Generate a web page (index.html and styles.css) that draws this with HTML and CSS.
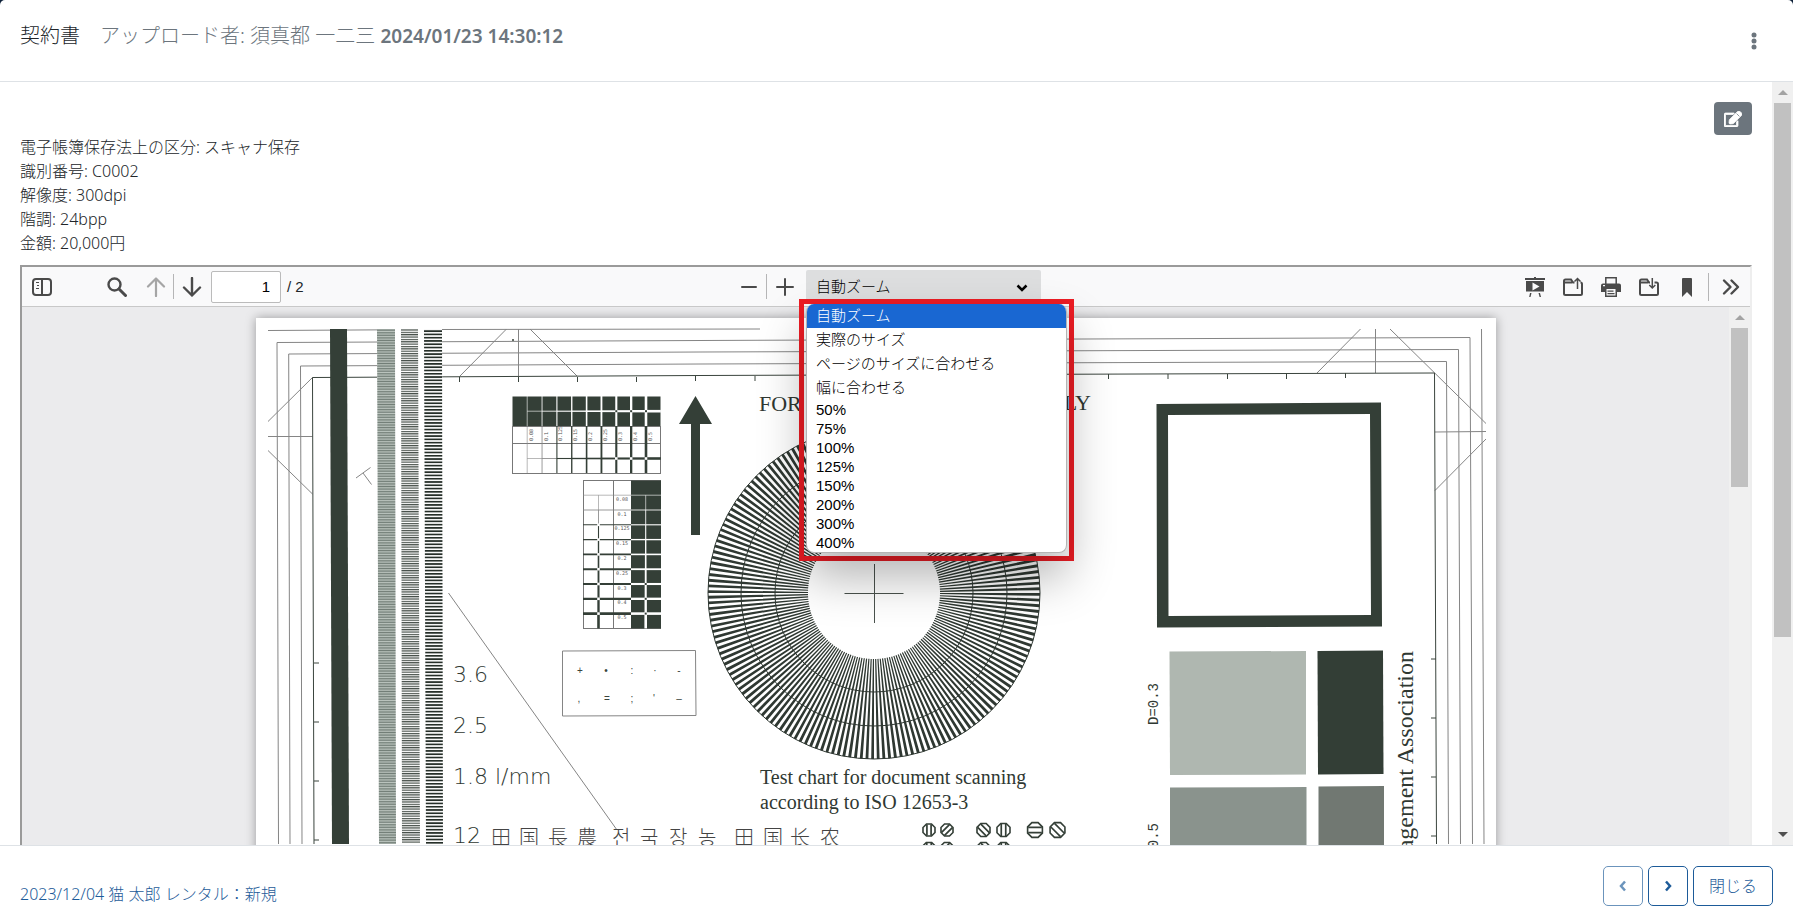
FILE: index.html
```html
<!DOCTYPE html>
<html lang="ja">
<head>
  <meta charset="UTF-8">
  <meta name="viewport" content="width=device-width, initial-scale=1.0">
  <title>契約書</title>
  <link rel="stylesheet" href="styles.css">
</head>
<body>
<div class="modal">
  <header class="modal-header">
    <h1 class="title">契約書</h1>
    <div class="uploader">アップロード者: 須真都 一二三 <time class="stamp">2024/01/23 14:30:12</time></div>
    <button class="menu-btn" aria-label="メニュー">
      <svg width="6" height="18" viewBox="0 0 6 18"><circle cx="3" cy="3" r="2.5"/><circle cx="3" cy="9" r="2.5"/><circle cx="3" cy="15" r="2.5"/></svg>
    </button>
  </header>

  <div class="modal-body">
    <main class="content">
      <div class="actions">
        <button class="edit-btn" aria-label="編集">
          <svg width="18" height="16" viewBox="0 0 576 512" fill="#fff" stroke="#fff" stroke-width="24"><path d="M402.300 344.900l32-32c5-5 13.700-1.500 13.700 5.700V464c0 26.500-21.500 48-48 48H48c-26.500 0-48-21.500-48-48V112c0-26.500 21.500-48 48-48h273.500c7.100 0 10.700 8.600 5.700 13.700l-32 32c-1.500 1.500-3.500 2.300-5.700 2.300H48v352h352V350.500c0-2.100.8-4.100 2.300-5.600z"/><path d="M558.900 143.100L296.300 405.700l-90.400 10c-26.200 2.900-48.500-19.200-45.600-45.600l10-90.400L432.900 17.100c22.900-22.900 59.900-22.900 82.700 0l43.200 43.200c22.900 22.900 22.900 60 .1 82.800z"/><path d="M402 82l92 92" stroke="#6c757d"/></svg>
        </button>
      </div>
      <ul class="meta">
        <li>電子帳簿保存法上の区分: スキャナ保存</li>
        <li>識別番号: C0002</li>
        <li>解像度: 300dpi</li>
        <li>階調: 24bpp</li>
        <li>金額: 20,000円</li>
      </ul>

      <section class="viewer">
        <div class="toolbar">
          <div class="tools">
            <button class="tool tool-sidebar" aria-label="サイドバー">
              <svg viewBox="0 0 20 20"><rect x="1" y="2" width="18" height="16" rx="3" fill="none" stroke="#4a4a4a" stroke-width="2"/><path d="M9 2h2v16H9zM4 5h3v1H4zM5 8h2v1H5zM4 11h3v1H4z" fill="#4a4a4a"/></svg>
            </button>
            <button class="tool tool-search" aria-label="検索">
              <svg viewBox="0 0 20 20" fill="none" stroke="#4a4a4a"><circle cx="7.500" cy="7.500" r="6" stroke-width="2.400"/><path d="M12 12l6.500 6.500" stroke-width="3" stroke-linecap="round"/></svg>
            </button>
            <button class="tool" aria-label="前のページ" disabled>
              <svg viewBox="0 0 20 20" fill="none" stroke="#a5a5a5" stroke-width="2.200" stroke-linecap="round" stroke-linejoin="round"><path d="M10 19V1.500M2 9.500l8-8 8 8"/></svg>
            </button>
            <span class="sep"></span>
            <button class="tool" aria-label="次のページ">
              <svg viewBox="0 0 20 20" fill="none" stroke="#4a4a4a" stroke-width="2.400" stroke-linecap="round" stroke-linejoin="round"><path d="M10 1v17.500M2 10.500l8 8 8-8"/></svg>
            </button>
            <input class="page-input" id="pageNumber" type="text" value="1" aria-label="ページ">
            <label class="page-count" for="pageNumber">/ 2</label>
          </div>
          <div class="tools">
            <button class="tool" aria-label="縮小">
              <svg viewBox="0 0 20 20" stroke="#4a4a4a" stroke-width="2" stroke-linecap="round"><path d="M3 10h14"/></svg>
            </button>
            <span class="sep"></span>
            <button class="tool" aria-label="拡大">
              <svg viewBox="0 0 20 20" stroke="#4a4a4a" stroke-width="2" stroke-linecap="round"><path d="M2 10h16M10 2v16"/></svg>
            </button>
            <div class="zoom">
              <select class="zoom-select" aria-label="ズーム">
                <option>自動ズーム</option>
                <option>実際のサイズ</option>
                <option>ページのサイズに合わせる</option>
                <option>幅に合わせる</option>
              </select>
              <svg class="zoom-caret" width="12" height="8" viewBox="0 0 12 8" fill="none" stroke="#000" stroke-width="2.500"><path d="M1.500 1.500L6 6l4.500-4.500"/></svg>
              <div class="zoom-frame">
                <ul class="zoom-list" role="listbox">
                  <li class="selected" role="option" aria-selected="true">自動ズーム</li>
                  <li role="option">実際のサイズ</li>
                  <li role="option">ページのサイズに合わせる</li>
                  <li role="option">幅に合わせる</li>
                  <li class="percent" role="option">50%</li>
                  <li class="percent" role="option">75%</li>
                  <li class="percent" role="option">100%</li>
                  <li class="percent" role="option">125%</li>
                  <li class="percent" role="option">150%</li>
                  <li class="percent" role="option">200%</li>
                  <li class="percent" role="option">300%</li>
                  <li class="percent" role="option">400%</li>
                </ul>
              </div>
            </div>
          </div>
          <div class="tools tools-right">
            <button class="tool" aria-label="プレゼンテーション">
              <svg viewBox="0 0 20 20" fill="#4a4a4a"><path d="M9 0h2v1h9v2H0V1h9z"/><path fill-rule="evenodd" d="M1 4h18v10.500H1zM7.500 5.500v8L14.500 9.500z"/><path d="M5 16h1.500L5.500 20H4.200zM13.500 16H15l1 4h-1.400z"/></svg>
            </button>
            <button class="tool" aria-label="開く">
              <svg viewBox="0 0 20 20" fill="none" stroke="#4a4a4a" stroke-width="2"><path d="M11.500 5.500H10L8 2.500H2.500Q1 2.500 1 4v12.500Q1 18 2.500 18h15q1.500 0 1.500-1.500V7q0-1.500-1.500-1.500"/><path d="M1 5.500h8"/><path d="M14.500 12V1.500M11.500 4.500l3-3 3 3" stroke-width="1.500"/></svg>
            </button>
            <button class="tool" aria-label="印刷">
              <svg viewBox="0 0 20 20" fill="#4a4a4a"><path d="M4.800 7V.8h10.400V7" fill="none" stroke="#4a4a4a" stroke-width="1.500"/><path fill-rule="evenodd" d="M2 6.500h16q2 0 2 2V15h-4v5H4v-5H0V8.500q0-2 2-2zM5.500 12v6.500h9V12zM2 8v1.200h2V8z"/><path d="M6.500 13.500h6v1.200h-6zM6.500 16h7v1.200h-7z"/></svg>
            </button>
            <button class="tool" aria-label="保存">
              <svg viewBox="0 0 20 20" fill="none" stroke="#4a4a4a" stroke-width="2"><path d="M11 5.500h-1L8 2.500H2.500Q1 2.500 1 4v12.500Q1 18 2.500 18h15q1.500 0 1.500-1.500V7q0-1.500-1.500-1.500H15.500"/><path d="M1 5.500h8"/><path d="M13.300 1v10M10.300 8l3 3 3-3" stroke-width="1.500"/></svg>
            </button>
            <button class="tool" aria-label="しおり">
              <svg viewBox="0 0 20 20" fill="#4a4a4a"><path d="M5 2q0-1 1-1h8q1 0 1 1v18l-5-5-5 5z"/></svg>
            </button>
            <span class="sep sep-tall"></span>
            <button class="tool" aria-label="ツール">
              <svg viewBox="0 0 20 20" fill="none" stroke="#4a4a4a" stroke-width="2.400" stroke-linecap="round" stroke-linejoin="round"><path d="M3 3.500l6.500 6.500L3 16.500M10.500 3.500L17 10l-6.500 6.500"/></svg>
            </button>
          </div>
        </div>

        <div class="viewer-body">
          <div class="page-area">
            <div class="pdf-page">
              <svg class="chart" viewBox="256 319 1240 1754">
                <defs>
                  <pattern id="lp36" width="20" height="1.640" patternUnits="userSpaceOnUse"><rect width="20" height="1.640" fill="#c3ccc6"/><rect width="20" height=".9" fill="#717d76"/></pattern>
                  <pattern id="lp25" width="20" height="2.360" patternUnits="userSpaceOnUse"><rect width="20" height="1.200" fill="#454e48"/></pattern>
                  <pattern id="lp18" width="20" height="3.280" patternUnits="userSpaceOnUse"><rect width="20" height="1.700" fill="#262f29"/></pattern>
                </defs>
                <!-- registration frame -->
                <g class="thin">
                  <path d="M268 331.500L441 330.500L760 330"/>
                  <path d="M278.500 845L277 343.500L700 341.500L1470 338.500L1472.500 845"/>
                  <path d="M290 845L288.700 355L700 353L1458.500 350.500L1460.500 845"/>
                  <path d="M302 845L300.500 367L700 365L1446.500 362.500L1448.500 845"/>
                  <path d="M1481.500 330L1484 845"/>
                  <path d="M268 422.500L312.500 378.500M268 437.500H312.500M268 451.500L312.500 495"/>
                  <path d="M459.500 377.500L506.500 330M518.500 330V377M530 330L577 377"/>
                  <path d="M1317 374L1360.500 330M1375.500 330V374M1390 330L1486 424.500M1435 433L1486 432.500M1435 491.500L1486 440"/>
                  <path d="M356 479L370.500 468.500M363 474L371.500 485.500"/>
                  <path d="M448.500 594L617 831"/>
                </g>
                <path class="frame" d="M314 845L312.500 378.500L700 376.500L1434.500 374L1436.500 845"/>
                <path class="frame" d="M459.500 378v5M518.500 378v5M577.500 378v5M636.500 378v5M695.500 377v5M755 377v5M1108.500 375v5M1168 375v5M1227.500 375v5M1286.500 375v5M1345.500 374v5M314 664h5M314 723h5M314 782h5M314 841h5M1436 660h-5M1436 719h-5M1436 778h-5M1436 837h-5"/>
                <!-- resolution bars -->
                <path class="ink" d="M330 330h17l2 515h-17z"/>
                <path fill="#fff" d="M377 330h65l2 515h-65z"/>
                <path fill="url(#lp36)" d="M377 330h18l1 515h-17z"/>
                <path fill="url(#lp25)" d="M401 330h17l2 515h-18z"/>
                <path fill="url(#lp18)" d="M424 330h18l1 515h-17z"/>
                <circle class="ink" cx="513" cy="341" r="1"/>
                <g id="tables"></g>
                <path class="ink" d="M695.500 397L712 425H700V536H691V425H679z"/>
                <path class="thin" d="M562.500 652L695.500 651.500L696 716.500L562.500 717z"/>
                <g class="marks">
                  <text x="580" y="675">+</text><text x="606" y="675">•</text><text x="632" y="675">:</text><text x="655" y="675">·</text><text x="679" y="675">-</text>
                  <text x="579" y="703">,</text><text x="607" y="703">=</text><text x="632" y="703">;</text><text x="654" y="703">'</text><text x="679" y="703">–</text>
                </g>
                <!-- star target, 180 spokes -->
                <circle cx="874" cy="594" r="116" fill="none" stroke="#2f3832" stroke-width="100" pathLength="360" stroke-dasharray="1 1"/>
                <g fill="none" stroke="#2f3832"><circle cx="874" cy="594" r="166"/><circle cx="874" cy="594" r="133"/><circle cx="874" cy="594" r="99"/></g>
                <path d="M844.500 594.500H903.500M874.500 565V624" stroke="#4a524d" fill="none"/>
                <path class="ink" fill-rule="evenodd" d="M1156.500 405L1381 403.500L1382 627.500L1157 628.500zM1168 416L1168.500 617L1371 616L1370 415z"/>
                <path fill="#afb7b0" d="M1169.500 652.500L1306 652L1306 775.500L1170 776z"/>
                <path fill="#333e36" d="M1317.500 652L1383 651.500L1383.500 775L1318 775.500z"/>
                <path fill="#8a938d" d="M1170 788.500L1306.500 788V900H1170z"/>
                <path fill="#717872" d="M1318.500 787.500L1384 787V900H1318.500z"/>
                <g class="serif">
                  <text class="notice" x="759" y="412">FOR</text>
                  <text class="notice" x="1091" y="411" text-anchor="end">ONLY</text>
                  <text x="760" y="785">Test chart for document scanning</text>
                  <text x="760" y="810">according to ISO 12653-3</text>
                  <text class="assoc" transform="translate(1413 652) rotate(-90)" text-anchor="end">Management Association</text>
                </g>
                <g class="mono">
                  <text transform="translate(1158 726) rotate(-90)">D=0.3</text>
                  <text transform="translate(1158 866) rotate(-90)">D=0.5</text>
                </g>
                <g class="sans">
                  <text x="453" y="683">3.6</text>
                  <text x="453" y="734">2.5</text>
                  <text x="453" y="785">1.8 l/mm</text>
                  <text x="453" y="844">12</text>
                </g>
                <g class="cjk">
                  <text x="491 519 548 577" y="846">田国長農</text>
                  <text x="612 640 669 698" y="846">전국장농</text>
                  <text x="734 763 790 820" y="846">田国长农</text>
                </g>
                <g id="targets"></g>
              </svg>
            </div>
          </div>
          <div class="scrollbar"><span class="arrow arrow-up"></span><span class="thumb thumb-inner"></span></div>
        </div>
      </section>
    </main>
    <div class="scrollbar"><span class="arrow arrow-up"></span><span class="thumb thumb-outer"></span><span class="arrow arrow-down"></span></div>
  </div>

  <footer class="modal-footer">
    <a class="record-link" href="#">2023/12/04 猫 太郎 レンタル：新規</a>
    <div class="pager">
      <button class="btn btn-icon" aria-label="前へ" disabled>
        <svg width="8" height="12" viewBox="0 0 8 12" fill="none" stroke="currentColor" stroke-width="2.500"><path d="M6 1.500L2 6l4 4.500"/></svg>
      </button>
      <button class="btn btn-icon" aria-label="次へ">
        <svg width="8" height="12" viewBox="0 0 8 12" fill="none" stroke="currentColor" stroke-width="2.500"><path d="M2 1.500L6 6l-4 4.500"/></svg>
      </button>
      <button class="btn">閉じる</button>
    </div>
  </footer>
</div>
<script src="chart.js"></script>
</body>
</html>
```
FILE: styles.css
```css
* {
  box-sizing: border-box;
}
body {
  margin: 0;
  background: #0d2038;
  font-family: "Noto Sans", "Noto Sans CJK JP", sans-serif;
  font-size: 16px;
  line-height: 24px;
  color: #212529;
}
button {
  font: inherit;
  cursor: pointer;
}
svg {
  display: block;
}
ul {
  list-style: none;
  margin: 0;
  padding: 0;
}

/* modal */
.modal {
  display: flex;
  flex-direction: column;
  height: 100vh;
  background: #fff;
  border-radius: 5px 5px 0 0;
  overflow: hidden;
}
.modal-header {
  display: flex;
  align-items: flex-start;
  gap: 20px;
  padding: 20px;
  border-bottom: 1px solid #dee2e6;
  height: 82px;
  font-size: 20px;
  line-height: 32px;
  font-weight: 300;
}
.title {
  margin: 0;
  font-size: 20px;
  font-weight: 300;
}
.uploader {
  color: #6c757d;
}
.stamp {
  font-size: 19px;
  font-weight: 600;
}
.menu-btn {
  margin-left: auto;
  padding: 12px 16px;
  border: 0;
  background: none;
  fill: #6c757d;
}
.modal-body {
  flex: 1;
  display: flex;
  min-height: 0;
}
.content {
  flex: 1;
  min-width: 0;
  padding: 20px;
  overflow: hidden;
}
.actions {
  display: flex;
  justify-content: flex-end;
}
.edit-btn {
  display: flex;
  align-items: center;
  justify-content: center;
  width: 38px;
  height: 33px;
  padding: 0;
  border: 0;
  border-radius: 4px;
  background: #6c757d;
}
.meta {
  margin-bottom: 10px;
  font-weight: 300;
}

/* scrollbars */
.scrollbar {
  display: flex;
  flex-direction: column;
  align-items: center;
  width: 21px;
  background: #f0f0f0;
}
.arrow {
  display: flex;
  align-items: center;
  justify-content: center;
  height: 21px;
}
.arrow::before {
  content: "";
  border: 5px solid transparent;
}
.arrow-up::before {
  border-top: 0;
  border-bottom-color: #a3a3a3;
}
.arrow-down {
  margin-top: auto;
}
.arrow-down::before {
  border-bottom: 0;
  border-top-color: #505050;
}
.thumb {
  width: 17px;
  background: #c1c1c1;
}
.thumb-outer {
  height: 70%;
}
.thumb-inner {
  height: 159px;
}

/* pdf viewer */
.viewer {
  border: 2px solid #9a9a9a;
  border-right-color: #eee;
  border-bottom-color: #eee;
}
.toolbar {
  display: grid;
  grid-template-columns: 1fr auto 1fr;
  height: 40px;
  padding: 0 2px;
  background: #f9f9fa;
  border-bottom: 1px solid #c8c8c8;
  font-size: 15px;
}
.tools {
  display: flex;
  align-items: center;
}
.tools-right {
  justify-content: flex-end;
  gap: 3px;
}
.tool {
  display: flex;
  align-items: center;
  justify-content: center;
  width: 35px;
  height: 35px;
  padding: 0;
  border: 0;
  background: none;
}
.tool svg {
  width: 20px;
  height: 20px;
}
.tool-sidebar {
  margin-right: 40px;
}
.tool-search {
  margin-right: 4px;
}
.sep {
  width: 1px;
  height: 25px;
  background: #b5b5b6;
}
.sep-tall {
  height: 28px;
  margin: 0 1px;
}
.page-input {
  width: 70px;
  height: 32px;
  margin-left: 2px;
  padding: 0 10px;
  border: 1px solid #bbb;
  border-radius: 2px;
  background: #fff;
  font: 15px "Liberation Sans", sans-serif;
  text-align: right;
}
.page-count {
  margin-left: 6px;
  font-family: "Liberation Sans", sans-serif;
}
.zoom {
  position: relative;
  width: 235px;
  margin-left: 4px;
}
.zoom-select {
  display: block;
  width: 100%;
  height: 34px;
  padding: 0 10px;
  appearance: none;
  border: 0;
  border-radius: 2px;
  background: #dddedf;
  color: #000;
  font: 300 15px "Liberation Sans", "Noto Sans CJK JP", sans-serif;
}
.zoom-caret {
  position: absolute;
  right: 13px;
  top: 14px;
}
.zoom-frame {
  position: absolute;
  z-index: 5;
  top: 29px;
  left: -7px;
  width: 275px;
  border: 5px solid #ed1c24;
  padding: 0 2px 3px;
}
.zoom-list {
  border: 1px solid #b4b4b4;
  border-width: 0 1px 1px;
  border-radius: 8px;
  overflow: hidden;
  background: #fff;
  box-shadow: 0 24px 48px rgba(0, 0, 0, .3);
  color: #000;
  font: 300 15px/24px "Liberation Sans", "Noto Sans CJK JP", sans-serif;
}
.zoom-list li {
  height: 24px;
  padding: 0 9px;
}
.zoom-list .selected {
  background: #1967d2;
  color: #fff;
}
.zoom-list .percent {
  height: 19px;
  line-height: 19px;
}
.viewer-body {
  display: flex;
  height: 720px;
  background: #ebebed;
}
.page-area {
  flex: 1;
  min-width: 0;
  padding: 11px 20px 0;
  overflow: hidden;
}
.pdf-page {
  max-width: 1240px;
  margin: 0 auto;
  background: #fff;
  box-shadow: 0 0 10px rgba(0, 0, 0, .35);
}

/* scanned chart */
.chart {
  width: 100%;
  height: auto;
}
.ink {
  fill: #343f37;
}
.thin {
  fill: none;
  stroke: #858585;
}
.frame {
  fill: none;
  stroke: #3a443d;
}
.serif {
  font-family: "Liberation Serif", serif;
  font-size: 20px;
  fill: #2f3832;
}
.notice {
  font-size: 22px;
}
.assoc {
  font-size: 24px;
}
.mono {
  font-family: "Liberation Mono", monospace;
  font-size: 14px;
  fill: #2f3832;
}
.sans {
  font-family: "DejaVu Sans", sans-serif;
  font-size: 22px;
  font-weight: 200;
  fill: #2f3832;
}
.cjk {
  font-family: "Noto Sans CJK JP", "Noto Sans CJK KR", sans-serif;
  font-size: 20px;
  font-weight: 300;
  fill: #444;
}
.marks {
  font-family: "Liberation Sans", sans-serif;
  font-size: 10px;
  text-anchor: middle;
  fill: #3a443d;
}
.tiny {
  font-family: "DejaVu Sans Mono", monospace;
  font-size: 5px;
  fill: #555;
}

/* footer */
.modal-footer {
  display: flex;
  align-items: flex-end;
  justify-content: space-between;
  padding: 20px 20px 18px;
  border-top: 1px solid #dee2e6;
}
.record-link {
  color: #1d5b99;
  font-weight: 300;
  text-decoration: none;
}
.pager {
  display: flex;
  gap: 5px;
}
.btn {
  height: 40px;
  padding: 0 15px;
  border: 1px solid #1d5b99;
  border-radius: 5px;
  background: #fff;
  color: #1d5b99;
  font-weight: 300;
}
.btn:disabled {
  opacity: .65;
}
```
FILE: chart.js
```js
const NS = 'http://www.w3.org/2000/svg';
const INK = '#343f37';
const labels = ['0.08', '0.1', '0.125', '0.15', '0.2', '0.25', '0.3', '0.4', '0.5'];
const tables = document.getElementById('tables');
const targets = document.getElementById('targets');

function add(parent, name, attrs, text) {
  const el = document.createElementNS(NS, name);
  for (const key in attrs) el.setAttribute(key, attrs[key]);
  if (text) el.textContent = text;
  parent.appendChild(el);
}
function line(parent, x1, y1, x2, y2, color, width) {
  add(parent, 'path', {d: `M${x1} ${y1}L${x2} ${y2}`, stroke: color, 'stroke-width': width, fill: 'none'});
}

// line width grows from one column to the next
const step = 14.85;
const weight = i => 0.6 + i * 0.25;

// horizontal table
add(tables, 'rect', {x: 512.5, y: 397.5, width: 148, height: 30, fill: INK});
add(tables, 'rect', {x: 512.5, y: 427.5, width: 148, height: 47, fill: 'none', stroke: '#777', 'stroke-width': 1});
line(tables, 512, 444.5, 661, 444.5, '#777', 1);
labels.forEach((label, i) => {
  const x = 527.2 + i * step;
  const w = weight(i);
  line(tables, x, 427, x, 474, i < 2 ? '#888' : INK, w);
  line(tables, x, 459.5, x + step, 459.5, i < 2 ? '#888' : INK, w);
  line(tables, x, 397, x, 427, '#fff', w);
  line(tables, x, 412.2, x + step, 412.2, '#fff', w);
  if (i > 5) {
    add(tables, 'rect', {x: x - 1.3, y: 458.2, width: 2.6, height: 2.6, fill: '#fff'});
    add(tables, 'rect', {x: x - 1, y: 411.2, width: 2, height: 2, fill: INK});
  }
  add(tables, 'text', {class: 'tiny', transform: `translate(${x + 5.5} 442) rotate(-90)`}, label);
});

// vertical table
add(tables, 'rect', {x: 583.5, y: 481.5, width: 77, height: 148, fill: 'none', stroke: '#777', 'stroke-width': 1});
add(tables, 'rect', {x: 631, y: 481.5, width: 30, height: 148, fill: INK});
line(tables, 613.5, 481, 613.5, 629, '#777', 1);
labels.forEach((label, i) => {
  const y = 496.2 + i * 14.8;
  const w = weight(i);
  line(tables, 583, y, 631, y, i < 2 ? '#888' : INK, w);
  line(tables, 598.5, y, 598.5, y + 14.8, i < 2 ? '#888' : INK, w);
  line(tables, 631, y, 661, y, '#fff', w);
  line(tables, 645.7, y, 645.7, y + 14.8, '#fff', w);
  if (i > 1) add(tables, 'rect', {x: 597.2, y: y - 1.3, width: 2.6, height: 2.6, fill: '#fff'});
  if (i > 5) add(tables, 'rect', {x: 644.7, y: y - 1, width: 2, height: 2, fill: INK});
  add(tables, 'text', {class: 'tiny', x: 622, y: y + 5.5, 'text-anchor': 'middle'}, label);
});

// octagon targets, each with bars turned by its own angle
function octagon(cx, cy, r, angle) {
  const pts = [];
  for (let k = 0; k < 8; k++) {
    const a = Math.PI / 8 + k * Math.PI / 4;
    pts.push((r * Math.cos(a)).toFixed(1) + ',' + (r * Math.sin(a)).toFixed(1));
  }
  const t = `translate(${cx} ${cy}) rotate(${angle})`;
  add(targets, 'polygon', {points: pts.join(' '), transform: t, fill: 'none', stroke: INK, 'stroke-width': 1.6});
  const s = r * 0.32;
  const h = r * 0.85;
  add(targets, 'path', {d: `M${-s} ${-h}V${h}M${s} ${-h}V${h}`, transform: t, stroke: INK, 'stroke-width': 1.7});
}
[[929, 6.5, 0], [947, 6.5, 45], [983.5, 7, -45], [1003.5, 7, 0], [1035, 8, 90], [1057.5, 8, -45]].forEach(([x, r, a]) => octagon(x, 831, r, a));
[[929, 0], [947, 45], [983.5, -45], [1003.5, 0]].forEach(([x, a]) => octagon(x, 850, 7, a));
```
